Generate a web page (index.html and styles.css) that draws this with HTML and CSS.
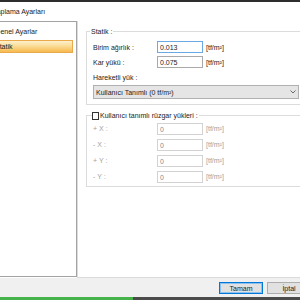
FILE: index.html
```html
<!DOCTYPE html>
<html lang="tr">
<head>
    <meta charset="UTF-8">
    <title>Kaplama Ayarları</title>
    <link rel="stylesheet" href="styles.css">
</head>
<body>
    <div class="topbar"></div>

    <div class="dialog">
        <div class="title">Kaplama Ayarları</div>

        <div class="main">
            <div class="tree">
                <div class="item">Genel Ayarlar</div>
                <div class="item sel">Statik</div>
            </div>

            <div class="content">
                <fieldset class="group">
                    <legend>Statik :</legend>
                    <div class="row">
                        <span class="lbl">Birim ağırlık :</span>
                        <input class="num focus" type="text" value="0.013">
                        <span class="unit">[tf/m²]</span>
                    </div>
                    <div class="row">
                        <span class="lbl">Kar yükü :</span>
                        <input class="num" type="text" value="0.075">
                        <span class="unit">[tf/m²]</span>
                    </div>
                    <div class="row">
                        <span class="lbl">Hareketli yük :</span>
                    </div>
                    <div class="combo">
                        <span>Kullanıcı Tanımlı (0 tf/m²)</span>
                        <svg width="6" height="4" viewBox="0 0 6 4">
                            <polyline points="0.5,0.5 3,3 5.5,0.5" fill="none" stroke="#6a6a6a" stroke-width="1"/>
                        </svg>
                    </div>
                </fieldset>

                <fieldset class="group wind">
                    <legend><input class="check" type="checkbox"> Kullanıcı tanımlı rüzgar yükleri :</legend>
                    <div class="row off">
                        <span class="lbl">+ X :</span>
                        <input class="num" type="text" value="0" disabled>
                        <span class="unit">[tf/m²]</span>
                    </div>
                    <div class="row off">
                        <span class="lbl">- X :</span>
                        <input class="num" type="text" value="0" disabled>
                        <span class="unit">[tf/m²]</span>
                    </div>
                    <div class="row off">
                        <span class="lbl">+ Y :</span>
                        <input class="num" type="text" value="0" disabled>
                        <span class="unit">[tf/m²]</span>
                    </div>
                    <div class="row off">
                        <span class="lbl">- Y :</span>
                        <input class="num" type="text" value="0" disabled>
                        <span class="unit">[tf/m²]</span>
                    </div>
                </fieldset>
            </div>
        </div>

        <div class="footer">
            <button class="btn default">Tamam</button>
            <button class="btn">İptal</button>
        </div>
    </div>

    <div class="taskbar"></div>
</body>
</html>
```

FILE: styles.css
```css
html, body {
    margin: 0;
    width: 300px;
    height: 300px;
    overflow: hidden;
}
body {
    font-family: "Liberation Sans", Arial, sans-serif;
    font-size: 7px;
    color: #1b1b1b;
    background: #f0f0f0;
}
.topbar {
    height: 2px;
    background: #2e2e2e;
}
.dialog {
    margin-left: -30px;
    width: 350px;
    background: #fff;
}
.title {
    height: 19px;
    line-height: 19px;
    padding-left: 22px;
}
.main {
    display: flex;
    height: 257px;
}
.tree {
    width: 107px;
    height: 256px;
    box-sizing: border-box;
    border: 1px solid #a3a3a3;
    border-left: none;
    box-shadow: 1px 0 0 #dcdcdc;
    padding-top: 2px;
    background: #fff;
}
.item {
    height: 15px;
    line-height: 15px;
    padding-left: 25px;
}
.item.sel {
    height: 13px;
    line-height: 11px;
    box-sizing: border-box;
    margin: 1px 3px 1px 0;
    padding-left: 24px;
    border: 1px solid #eaa94a;
    background: linear-gradient(#fef1cd, #fcdc96 45%, #f7b94f);
}
.content {
    flex: 1;
    height: 257px;
    box-sizing: border-box;
    border-bottom: 1px solid #dadada;
}
.group {
    margin: 6px 0 0 9px;
    padding: 4px 0 5px 6px;
    border: 1px solid #dcdcdc;
    min-width: 0;
}
.group legend {
    height: 9px;
    line-height: 9px;
    margin-left: -3px;
    padding: 0 1px;
}
.row {
    display: flex;
    align-items: flex-start;
    height: 15px;
    line-height: 15px;
}
.lbl {
    width: 64px;
}
.num {
    width: 46px;
    height: 12px;
    box-sizing: border-box;
    margin: 1px 3px 0 0;
    padding: 0 2px;
    border: 1px solid #a9a9a9;
    background: #fff;
    font-family: inherit;
    font-size: 7px;
    color: #1b1b1b;
    outline: none;
}
.num.focus {
    border-color: #6aa8e6;
}
.combo {
    width: 206px;
    height: 14px;
    box-sizing: border-box;
    display: flex;
    align-items: center;
    justify-content: space-between;
    padding: 0 2px;
    border: 1px solid #b0b0b0;
    background: #e5e5e5;
}
.wind {
    padding-top: 2px;
    padding-bottom: 0;
}
.wind legend {
    display: flex;
    align-items: center;
    gap: 1px;
    margin-left: -1px;
    padding: 0 1px 0 0;
}
.check {
    appearance: none;
    width: 7px;
    height: 8px;
    margin: 0;
    border: 1px solid #333;
    background: #fff;
}
.wind .row {
    height: 16px;
    line-height: 14px;
}
.row.off .lbl,
.row.off .unit {
    color: #a2a2a2;
}
.row.off .num {
    border-color: #d2d2d2;
    color: #8a8a8a;
}
.footer {
    height: 19px;
    box-sizing: border-box;
    display: flex;
    justify-content: flex-end;
    align-items: flex-start;
    gap: 4px;
    padding: 4px 9px 0 0;
    background: #f0f0f0;
}
.btn {
    width: 44px;
    height: 12px;
    padding: 0;
    border: 1px solid #adadad;
    background: #e1e1e1;
    font-family: inherit;
    font-size: 7px;
    color: #1b1b1b;
}
.btn.default {
    border-color: #0078d7;
    box-shadow: inset 0 0 0 1px #8cc0ee;
}
.taskbar {
    height: 3px;
    background: linear-gradient(to right, #46b34a 0 133px, #4b4b4b 133px);
}
```
